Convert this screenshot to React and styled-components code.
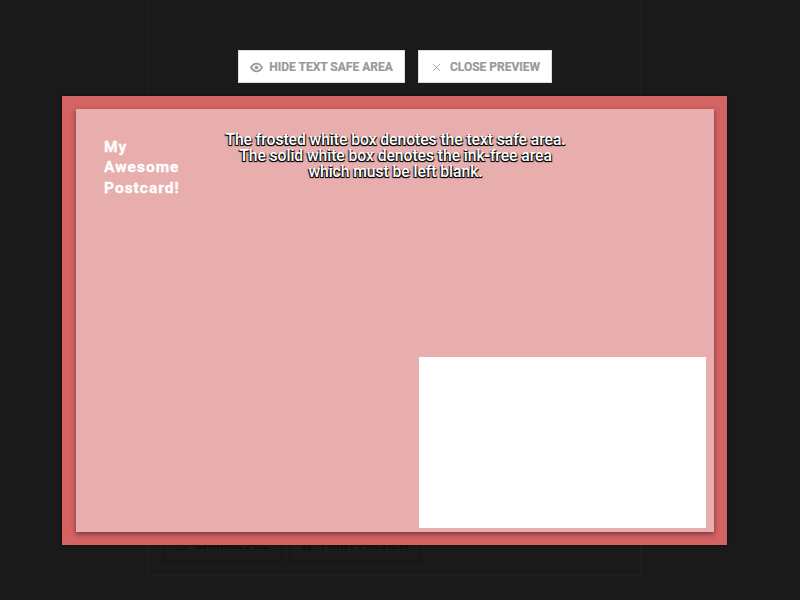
import React from "react";
import styled, { createGlobalStyle } from "styled-components";
import { X, Upload, Printer } from "lucide-react";

const Global = createGlobalStyle`
  html, body { margin: 0; padding: 0; height: 100%; background: #1a1a1a; overflow: hidden; }
  * { box-sizing: border-box; }
`;

const Page = styled.div`
  width: 800px;
  height: 600px;
  position: relative;
  background: #1a1a1a;
  font-family: Roboto, "Liberation Sans", sans-serif;
  overflow: hidden;
`;

const BackPanel = styled.div`
  margin-left: 148px;
  width: 493px;
  height: 576px;
  border: 1px solid #1f1f1f;
  border-top: 0;
  padding: 0 0 13px 14px;
  display: flex;
  flex-direction: column;
  justify-content: flex-end;
`;

const BackRow = styled.div`
  display: flex;
  gap: 7px;
`;

const BackButton = styled.div`
  width: ${(p) => p.$w}px;
  height: 34px;
  border: 1px solid #131313;
  display: flex;
  align-items: center;
  justify-content: center;
  gap: 8px;
  color: #0f0f0f;
  font-size: 12px;
  font-weight: 700;
`;

const Overlay = styled.div`
  position: absolute;
  inset: 0;
  display: flex;
  flex-direction: column;
  align-items: center;
  padding-top: 50px;
`;

const Toolbar = styled.div`
  display: flex;
  gap: 13px;
  margin-bottom: 13px;
  margin-left: -10px;
`;

const ToolButton = styled.div`
  width: ${(p) => p.$w}px;
  height: 33px;
  background: #fff;
  border: 1px solid #ddd;
  display: flex;
  align-items: center;
  justify-content: center;
  gap: ${(p) => p.$gap}px;
  color: #999;
  font-size: 12px;
  font-weight: 700;
  -webkit-text-stroke: 0.2px #999;
`;

const ButtonIcon = styled.svg`
  width: 13px;
  height: 13px;
  margin-top: 2px;
  flex: none;
`;

const CloseIcon = styled(X)`
  margin-top: 1px;
`;

const Bleed = styled.div`
  width: 665px;
  height: 449px;
  margin-left: -11px;
  background: #d46363;
  padding: 13px 13px 13px 14px;
  box-shadow: 0 0 2px rgba(0, 0, 0, 0.5);
`;

const Card = styled.div`
  position: relative;
  width: 100%;
  height: 100%;
  background: #e8aeae;
  box-shadow: 0 2px 5px rgba(0, 0, 0, 0.45);
  padding: 28px 0 4px 28px;
  display: flex;
  flex-direction: column;
`;

const Title = styled.div`
  width: 90px;
  color: #fff;
  font-size: 15.5px;
  line-height: 20.4px;
  font-weight: 700;
  letter-spacing: 1px;
  -webkit-text-stroke: 0.3px #fff;
  flex: 1;
  margin-bottom: 1px;
`;

const InkFree = styled.div`
  align-self: flex-end;
  width: 287px;
  height: 171px;
  margin-right: 8px;
  background: #fff;
`;

const Notice = styled.div`
  position: absolute;
  top: 23px;
  left: 0;
  width: 639px;
  text-align: center;
  color: #fff;
  font-size: 15.7px;
  font-weight: 500;
  line-height: 16px;
  letter-spacing: -0.05px;
  -webkit-font-smoothing: antialiased;
  text-shadow: -1px 1px 1px #000, 0 1px 0 #000, 1px 1px 1px #000;
`;

export default function App() {
  return (
    <Page>
      <Global />
      <BackPanel>
        <BackRow>
          <BackButton $w={119}>
            <Upload size={12} />
            CHANGE FILE
          </BackButton>
          <BackButton $w={132}>
            <Printer size={12} />
            PRINT PREVIEW
          </BackButton>
        </BackRow>
      </BackPanel>
      <Overlay>
        <Toolbar>
          <ToolButton $w={167} $gap={6}>
            <ButtonIcon viewBox="0 0 24 24" aria-hidden="true">
              <path
                d="M1.8 12C4.5 7.2 8 5 12 5s7.5 2.2 10.2 7c-2.7 4.8-6.2 7-10.2 7S4.5 16.8 1.8 12Z"
                fill="none"
                stroke="currentColor"
                strokeWidth="3.2"
              />
              <circle cx="12" cy="12" r="3.4" fill="currentColor" />
            </ButtonIcon>
            HIDE TEXT SAFE AREA
          </ToolButton>
          <ToolButton $w={134} $gap={7}>
            <CloseIcon size={13} strokeWidth={1.5} />
            CLOSE PREVIEW
          </ToolButton>
        </Toolbar>
        <Bleed>
          <Card>
            <Title>My Awesome Postcard!</Title>
            <Notice>
              The frosted white box denotes the text safe area.
              <br />
              The solid white box denotes the ink-free area
              <br />
              which must be left blank.
            </Notice>
            <InkFree />
          </Card>
        </Bleed>
      </Overlay>
    </Page>
  );
}
